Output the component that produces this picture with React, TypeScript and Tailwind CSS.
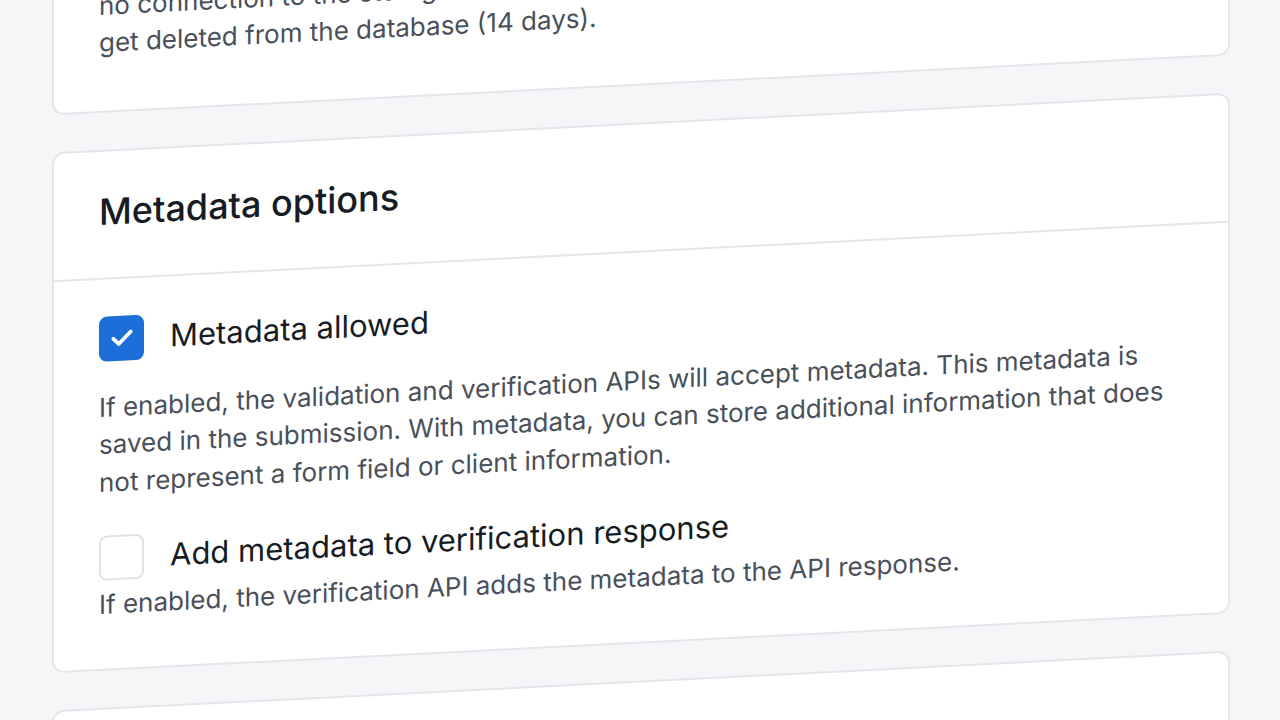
import React from "react";

export default function App() {
  return (
    <div className="w-[1280px] h-[720px] overflow-hidden bg-[#f5f6f8]" style={{ fontFamily: "Inter, 'Noto Sans', sans-serif" }}>
      <div className="pl-[52px] w-[1230px] origin-top-left [transform:skewY(-2.9deg)] translate-y-[10px] flex flex-col gap-[37px]">
        <div className="mt-[-40px] bg-white border-2 border-[#e3e6eb] rounded-xl px-[45px] pt-[20px] pb-[50px] text-[26px] leading-[37px] text-[#4a505a]">
          <p>no connection to the storage will be removed and their files will</p>
          <p>get deleted from the database (14 days).</p>
        </div>
        <div className="bg-white border-2 border-[#e3e6eb] rounded-xl">
          <div className="h-[128px] border-b-2 border-[#e3e6eb] px-[45px] pt-[36px]">
            <h2 className="text-[36px] leading-[48px] text-[#161b24] font-medium">Metadata options</h2>
          </div>
          <div className="px-[45px] pt-[36px] pb-[46px]">
            <div className="flex items-center gap-[26px]">
              <div className="w-[45px] h-[45px] rounded-[8px] bg-[#1c6fd8] flex items-center justify-center">
                <svg width="26" height="26" viewBox="0 0 24 24" fill="none" stroke="white" strokeWidth="3.5" strokeLinecap="round" strokeLinejoin="round"><path d="M4 12.5l5 5L20 6.5" /></svg>
              </div>
              <span className="text-[31px] text-[#161b24]">Metadata allowed</span>
            </div>
            <p className="mt-[26px] text-[26px] leading-[37.5px] text-[#4a505a]">
              If enabled, the validation and verification APIs will accept metadata. This metadata is saved in the submission. With metadata, you can store additional information that does not represent a form field or client information.
            </p>
            <div className="mt-[34px] flex items-center gap-[26px]">
              <div className="w-[45px] h-[45px] rounded-[8px] border-2 border-[#dfe2e7] bg-white" />
              <span className="text-[31px] text-[#161b24]">Add metadata to verification response</span>
            </div>
            <p className="mt-[4px] text-[26px] leading-[37.5px] text-[#4a505a]">
              If enabled, the verification API adds the metadata to the API response.
            </p>
          </div>
        </div>
        <div className="h-[200px] bg-white border-2 border-[#e3e6eb] rounded-xl" />
      </div>
    </div>
  );
}
